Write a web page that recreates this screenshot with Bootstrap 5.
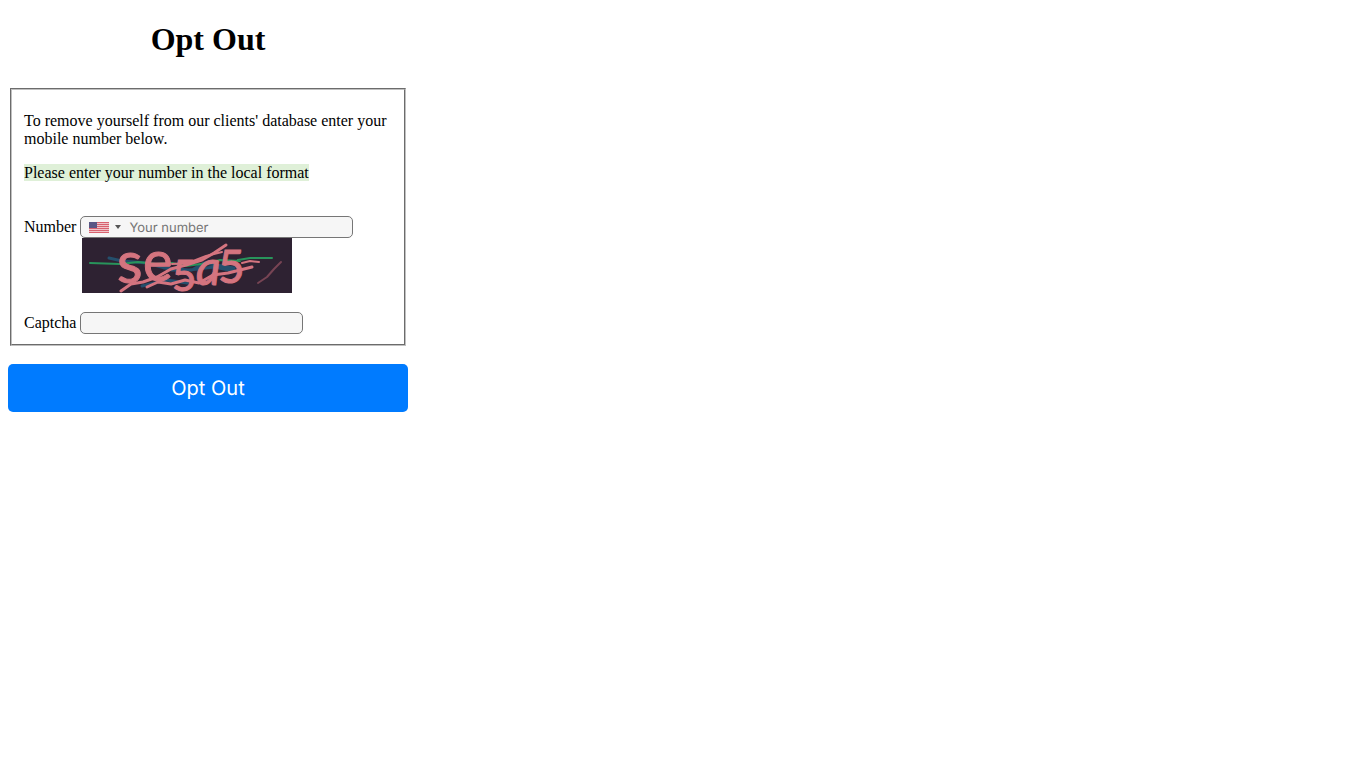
<!DOCTYPE html>
<html lang="en">
<head>
<meta charset="utf-8">
<meta name="viewport" content="width=device-width, initial-scale=1">
<title>Opt Out</title>
<link href="https://cdn.jsdelivr.net/npm/bootstrap@5.3.0/dist/css/bootstrap.min.css" rel="stylesheet">
<style>
  body { font-family: "Liberation Serif", serif; font-size: 16px; line-height: 18px; color: #000; }
  .optout { max-width: 416px; padding: 20px 8px 8px; }
  .page-title { font-size: 32px; line-height: 38px; margin-bottom: 30px; }
  .form-box { border: 2px groove #c0c0c0; margin: 0 2px 18px; padding: 22px 12px 10px; }
  .hint { background: #dff0d8; }
  .number-row { margin-top: 34px; }
  .field { height: 22px; border: 1px solid #767676; border-radius: 5px; background: #f6f6f6; font: 13px Inter, sans-serif; padding: 2px 2px 0; text-rendering: geometricPrecision; }
  .field::placeholder { color: #757575; }
  .phone { width: 273px; }
  .phone .field { padding-left: 48px; }
  .country { top: 1px; left: 1px; height: 20px; padding: 0 6px 0 8px; border: 0; background: none; }
  .captcha-pic { margin: 0 0 19px 58px; }
  .captcha-pic svg { overflow: visible; }
  .captcha-pic text { font-family: Lato, sans-serif; fill: #d4747f; stroke: #d4747f; }
  .captcha-input { width: 223px; }
  .send { background: #007bff; border: 0; border-radius: 5px; height: 48px; font: 20px Inter, sans-serif; color: #fff; text-rendering: geometricPrecision; }
</style>
</head>
<body>
<main class="optout">
  <h1 class="page-title text-center fw-bold">Opt Out</h1>
  <form>
    <fieldset class="form-box">
      <p class="mb-3">To remove yourself from our clients' database enter your mobile number below.</p>
      <p class="mb-0"><span class="hint">Please enter your number in the local format</span></p>
      <div class="number-row d-flex align-items-center gap-1">
        <label for="number">Number</label>
        <div class="phone position-relative d-flex">
          <input id="number" type="tel" class="field w-100" placeholder="Your number">
          <button type="button" class="country position-absolute d-flex align-items-center" aria-label="Country: United States">
            <svg width="32" height="11" viewBox="0 0 32 11">
              <path fill="#efc5ca" d="M0 0h20v11H0z"/>
              <path stroke="#d8626f" d="M0 .5h20M0 2.5h20M0 4.5h20M0 6.5h20M0 8.5h20M0 10.5h20"/>
              <path fill="#5a5785" d="M0 0h8v6H0z"/>
              <path fill="#555" d="M26 3h6l-3 4z"/>
            </svg>
          </button>
        </div>
      </div>
      <div class="captcha-pic">
        <svg class="d-block" width="210" height="55" viewBox="0 0 210 55" role="img" aria-label="Captcha picture">
          <path fill="#2e2232" d="M0 0h210v55H0z"/>
          <g fill="none" stroke-linecap="round" stroke-linejoin="round">
            <path stroke="#244f6c" stroke-width="3" d="M27 20l13 3 25 2 25 7 20 0 12-7 30 5M82 30l25 2 25-3 20 4M60 48l25-6 20 3"/>
            <path stroke="#28945b" stroke-width="2" d="M8 25l30 1 18-2 18 2 16-1 14 3 22-3 12-3 20 1M156 22l12-2 22 0"/>
          </g>
          <text x="35" y="45" font-size="59" stroke-width="1">s</text>
          <text x="61" y="43" font-size="56" stroke-width="1">e</text>
          <text x="90" y="53" font-size="42" stroke-width="1">5</text>
          <text x="114" y="47" font-size="48" font-style="italic" stroke-width="1">a</text>
          <text x="136" y="45" font-size="46" stroke-width="1">5</text>
          <g fill="none" stroke="#d4747f" stroke-width="2" stroke-linecap="round" stroke-linejoin="round">
            <path stroke-width="3" d="M39 53l10-7 12-2 14-5 14-8 15-4 16-5 12-7 12-8"/>
            <path stroke-width="3" d="M65 49l11-5 13 2 14-4 14 3 14-8 15-2 12-3 12-3"/>
            <path d="M90 26l16-1 18-7 16-4M160 25l8-2 9 1"/>
            <path stroke="#774454" d="M176 45l9-6 7-8 7-7"/>
          </g>
        </svg>
      </div>
      <div class="d-flex align-items-center gap-1">
        <label for="captcha">Captcha</label>
        <input id="captcha" type="text" class="field captcha-input">
      </div>
    </fieldset>
    <button type="submit" class="send w-100">Opt Out</button>
  </form>
</main>
<script src="https://cdn.jsdelivr.net/npm/bootstrap@5.3.0/dist/js/bootstrap.bundle.min.js"></script>
</body>
</html>
